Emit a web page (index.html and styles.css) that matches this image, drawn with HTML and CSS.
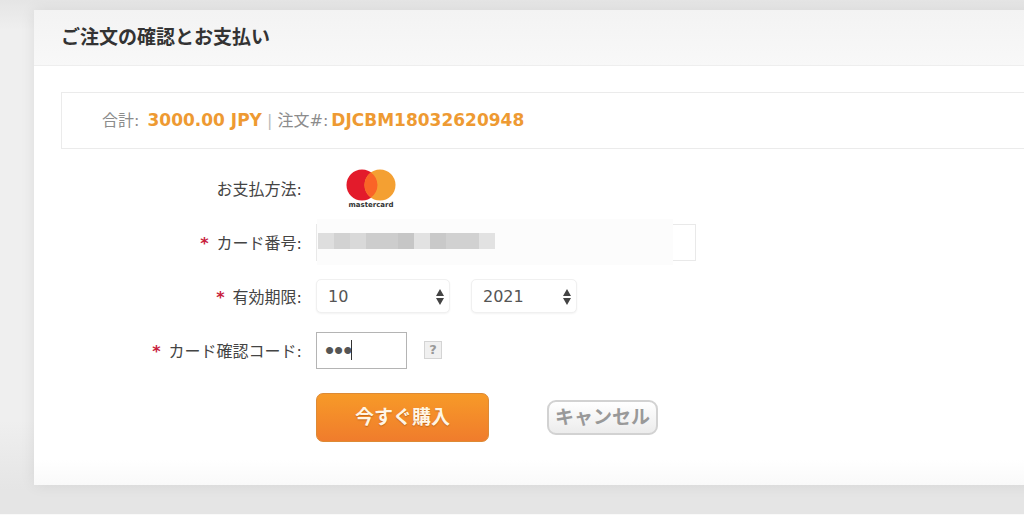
FILE: index.html
```
<!DOCTYPE html>
<html lang="ja">
<head>
  <meta charset="UTF-8" />
  <title>ご注文の確認とお支払い</title>
  <link rel="stylesheet" href="styles.css">
</head>
<body>
  <div class="wrapper">
    <div class="panel">
      <h1>ご注文の確認とお支払い</h1>

      <div class="summary">
        合計: <strong>3000.00 JPY</strong> <span class="sep">|</span> 注文#:<strong>DJCBM18032620948</strong>
      </div>

      <form>
        <div class="row">
          <span class="label">お支払方法:</span>
          <svg class="mastercard" width="52" height="46" viewBox="0 -4 52 46" role="img" aria-label="mastercard">
            <circle cx="17" cy="16" r="15.5" fill="#e31b2b" />
            <circle cx="35" cy="16" r="15.5" fill="#f4a032" />
            <path d="M26 3.400a15.500 15.500 0 0 1 0 25.200a15.500 15.500 0 0 1 0-25.200z" fill="#fa6427" />
            <text x="26" y="38" text-anchor="middle">mastercard</text>
          </svg>
        </div>

        <div class="row">
          <label class="label" for="card"><em>*</em>カード番号:</label>
          <div class="card-field">
            <input id="card" type="text" autocomplete="off">
            <span class="mask"></span>
          </div>
        </div>

        <div class="row">
          <label class="label" for="month"><em>*</em>有効期限:</label>
          <div class="select month">
            <select id="month"><option>10</option></select>
            <svg width="10" height="16" viewBox="0 0 10 16"><path d="M5 0l4 7H1zM5 16l4-7H1z" /></svg>
          </div>
          <div class="select year">
            <select id="year" aria-label="年"><option>2021</option></select>
            <svg width="10" height="16" viewBox="0 0 10 16"><path d="M5 0l4 7H1zM5 16l4-7H1z" /></svg>
          </div>
        </div>

        <div class="row">
          <label class="label" for="cvc"><em>*</em>カード確認コード:</label>
          <div class="cvc-field">
            <input id="cvc" type="password" value="123">
            <span class="caret"></span>
          </div>
          <button class="help" type="button">?</button>
        </div>

        <div class="actions">
          <button class="buy" type="button">今すぐ購入</button>
          <button class="cancel" type="button">キャンセル</button>
        </div>
      </form>
    </div>
  </div>
</body>
</html>
```

FILE: styles.css
```
* {
  box-sizing: border-box;
}
body {
  margin: 0;
  background: #fafafa;
  color: #444;
  font-family: "DejaVu Sans", "Noto Sans CJK JP", sans-serif;
  font-size: 16px;
}
input, select, button {
  font-family: inherit;
  font-size: 16px;
  color: #555;
}
.wrapper {
  padding: 10px 0 29px 34px;
  background: linear-gradient(#e5e5e5, #efefef 30px, #efefef 420px, #e5e5e5 490px);
  overflow: hidden;
}
.panel {
  margin-right: -20px;
  padding-bottom: 43px;
  background: linear-gradient(#fff, #fff 450px, #f9f9f9);
  box-shadow: 0 0 14px rgba(0, 0, 0, 0.08);
}
h1 {
  margin: 0;
  height: 56px;
  padding-left: 27px;
  line-height: 54px;
  font-size: 19px;
  color: #333;
  background: linear-gradient(#f3f3f3, #f8f8f8);
  border-bottom: 1px solid #eee;
}
.summary {
  height: 57px;
  margin: 26px 0 12px 27px;
  padding-left: 40px;
  line-height: 54px;
  border: 1px solid #ebebeb;
  border-right: none;
  color: #8c8c8c;
  white-space: nowrap;
}
.summary strong {
  margin-left: 3px;
  font-size: 17px;
  color: #ee9a32;
}
.sep {
  color: #bbb;
}
.row {
  display: flex;
  align-items: center;
  height: 54px;
}
.label {
  width: 268px;
  margin-right: 14px;
  text-align: right;
}
.label em {
  margin-right: 8px;
  font-style: normal;
  font-weight: bold;
  color: #c8203c;
}
.mastercard {
  margin-left: 29px;
}
.mastercard text {
  font-family: "DejaVu Sans", sans-serif;
  font-size: 7px;
  font-weight: bold;
  fill: #333;
}
.card-field {
  position: relative;
  width: 380px;
}
.card-field input {
  display: block;
  width: 100%;
  height: 37px;
  border: 1px solid #e9e9e9;
  background: #fff;
}
/* covers the saved card number */
.mask {
  position: absolute;
  top: -5px;
  left: 1px;
  width: 356px;
  height: 46px;
  background:
    linear-gradient(90deg, #dedede 16px, #d2d2d2 16px 32px, #d9d9d9 32px 48px, #cdcdcd 48px 80px, #c6c6c6 80px 96px, #e2e2e2 96px 112px, #c9c9c9 112px 128px, #d1d1d1 128px 161px, #e2e2e2 161px) 1px 14px / 177px 16px no-repeat,
    #fcfcfc;
}
.select {
  position: relative;
}
.select select {
  display: block;
  width: 100%;
  height: 34px;
  padding: 0 11px;
  appearance: none;
  background: #fff;
  border: 1px solid #f0f0f0;
  border-radius: 5px;
  box-shadow: 0 1px 2px rgba(0, 0, 0, 0.05);
}
.select svg {
  position: absolute;
  top: 10px;
  right: 5px;
  fill: #444;
  pointer-events: none;
}
.month {
  width: 134px;
  margin-right: 21px;
}
.year {
  width: 106px;
}
.cvc-field {
  position: relative;
  width: 91px;
  margin-right: 17px;
}
.cvc-field input {
  display: block;
  width: 100%;
  height: 37px;
  padding: 0 8px;
  border: 1px solid #b4b4b4;
  background: #fff;
  font-family: "Liberation Sans", sans-serif;
  font-size: 26px;
  outline: none;
}
.caret {
  position: absolute;
  top: 8px;
  left: 35px;
  width: 1px;
  height: 20px;
  background: #333;
}
.help {
  width: 18px;
  height: 18px;
  padding: 0;
  border: 1px solid #d4d4d4;
  background: #f0f0f0;
  font-size: 13px;
  font-weight: bold;
  line-height: 16px;
  color: #999;
}
.actions {
  display: flex;
  align-items: center;
  margin: 16px 0 0 282px;
}
.buy {
  width: 173px;
  height: 49px;
  padding: 0 0 4px;
  border: 1px solid #dd8a35;
  border-radius: 7px;
  background: linear-gradient(#f79a28, #f07c2c);
  font-size: 19px;
  font-weight: bold;
  color: #fff5e4;
  text-shadow: 0 1px 1px rgba(150, 70, 0, 0.5);
}
.cancel {
  width: 111px;
  height: 35px;
  margin-left: 58px;
  padding: 0 0 4px;
  border: 2px solid #d2d2d2;
  border-radius: 9px;
  background: linear-gradient(#fff, #ececec);
  font-size: 19px;
  font-weight: bold;
  color: #999;
}
```
